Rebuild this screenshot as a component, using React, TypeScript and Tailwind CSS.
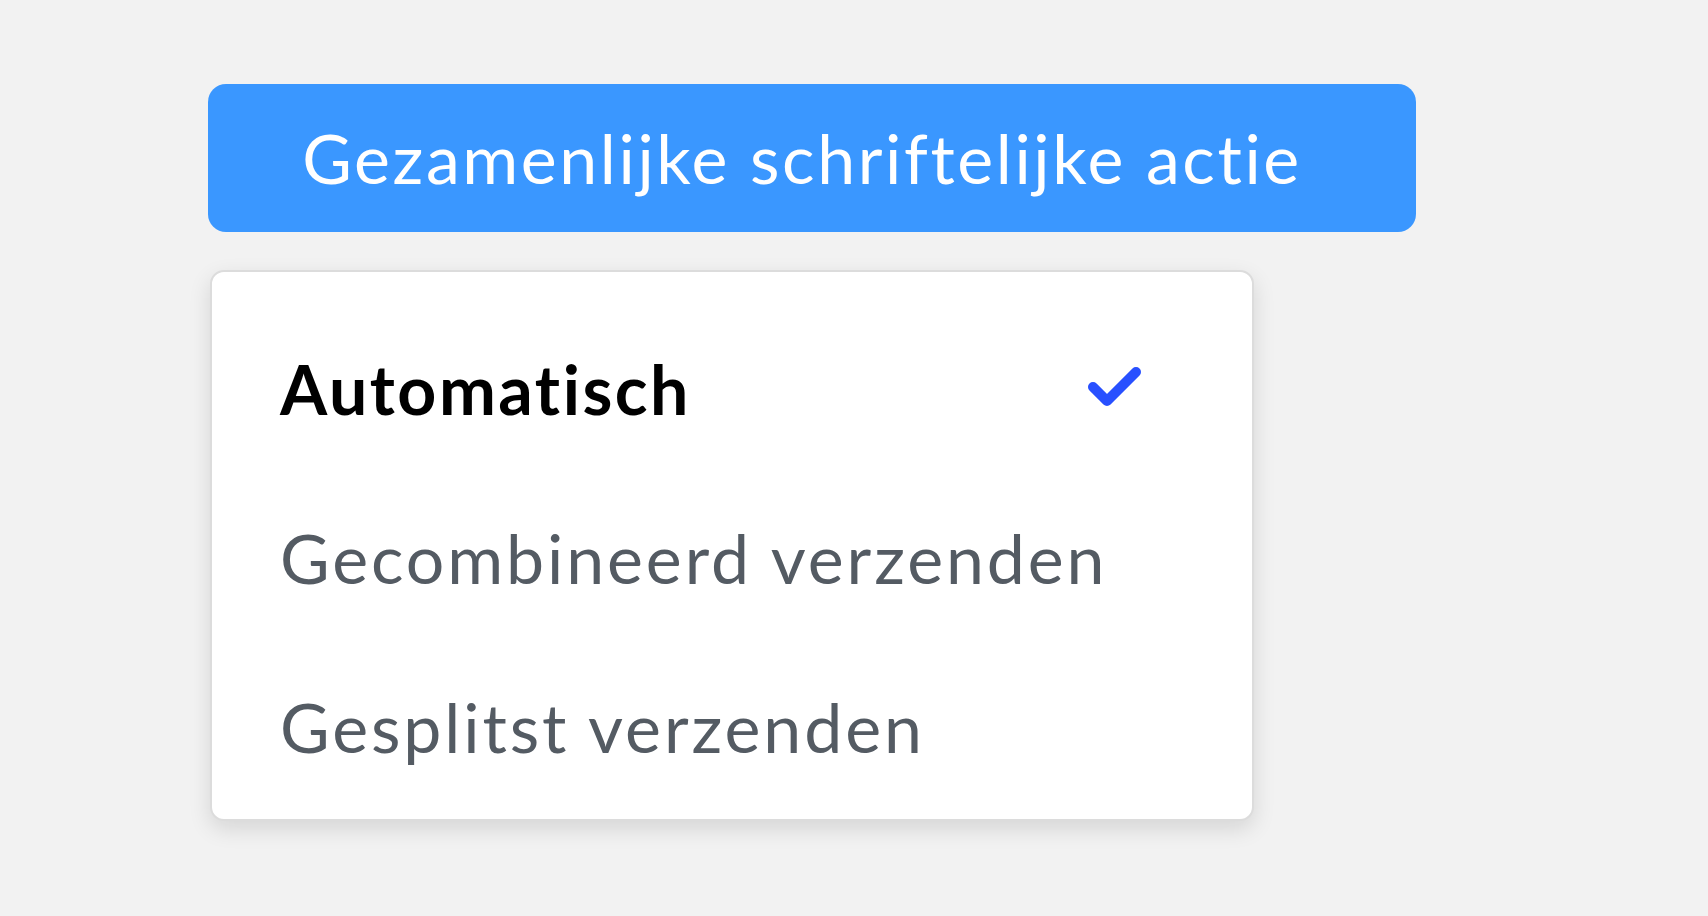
import { useState } from 'react';

const options = ['Automatisch', 'Gecombineerd verzenden', 'Gesplitst verzenden'];

export default function App() {
  const [selected, setSelected] = useState(0);

  return (
    <div className="min-h-[916px] w-full bg-[#f2f2f2] pl-[208px] pt-[84px] font-['Lato',sans-serif] [font-variant-ligatures:none]">
      {/* Trigger */}
      <button className="flex h-[148px] w-[1208px] items-center justify-center rounded-[18px] bg-[#3a97ff] pr-[20px] text-[68px] leading-none tracking-[2.6px] text-white">
        Gezamenlijke schriftelijke actie
      </button>

      {/* Menu */}
      <div className="ml-[2px] mt-[38px] flex h-[551px] w-[1044px] flex-col rounded-[14px] border-2 border-[#dcdcdc] bg-white pt-[32px] pl-[68px] pr-[108px] shadow-[0_8px_22px_rgba(0,0,0,0.12)]">
        {options.map((label, i) => (
          <div
            key={label}
            onClick={() => setSelected(i)}
            className="flex h-[169px] cursor-pointer items-center justify-between"
          >
            <span
              className={
                i === selected
                  ? 'text-[68px] font-bold leading-none tracking-[2.5px] text-black'
                  : 'text-[68px] leading-none tracking-[2.9px] text-[#545b63]'
              }
            >
              {label}
            </span>
            {i === selected && (
              <svg width="60" height="48" viewBox="0 0 60 48" fill="none" className="-mt-[4px]">
                <path
                  d="M9 24 L23 38 L52 9"
                  stroke="#2850ff"
                  strokeWidth="10"
                  strokeLinecap="round"
                  strokeLinejoin="round"
                />
              </svg>
            )}
          </div>
        ))}
      </div>
    </div>
  );
}
